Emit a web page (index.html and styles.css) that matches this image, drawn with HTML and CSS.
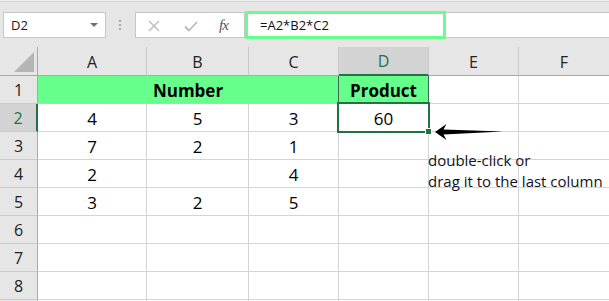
FILE: index.html
```html
<html>
<head>
<title>Product formula</title>
<link rel="stylesheet" href="styles.css">
</head>
<body>

<div id="toolbar">
	<div class="namebox"><span>D2</span><span class="caret"></span></div>
	<div class="grip"><i></i><i></i><i></i></div>
	<div class="fbtns">
		<svg class="ico" width="12" height="12" viewBox="0 0 12 12"><path d="M1 1 L11 11 M11 1 L1 11" stroke="#bababa" stroke-width="1.4" fill="none"/></svg>
		<svg class="ico" width="14" height="11" viewBox="0 0 14 11"><path d="M1 5.5 L5 9.5 L13 1" stroke="#bababa" stroke-width="1.8" fill="none"/></svg>
		<span class="fx">fx</span>
	</div>
	<div class="formula">=A2*B2*C2<div class="mark"></div></div>
</div>

<div id="sheet">
	<div class="corner"><span></span></div>
	<div class="colhead">A</div>
	<div class="colhead">B</div>
	<div class="colhead">C</div>
	<div class="colhead sel">D</div>
	<div class="colhead">E</div>
	<div class="colhead">F</div>

	<div class="rowhead">1</div>
	<div class="cell title merged">Number</div>
	<div class="cell title prod">Product</div>
	<div class="cell"></div>
	<div class="cell"></div>

	<div class="rowhead sel">2</div>
	<div class="cell">4</div>
	<div class="cell">5</div>
	<div class="cell">3</div>
	<div class="cell">60</div>
	<div class="cell"></div>
	<div class="cell"></div>

	<div class="rowhead">3</div>
	<div class="cell">7</div>
	<div class="cell">2</div>
	<div class="cell">1</div>
	<div class="cell"></div>
	<div class="cell"></div>
	<div class="cell"></div>

	<div class="rowhead">4</div>
	<div class="cell">2</div>
	<div class="cell"></div>
	<div class="cell">4</div>
	<div class="cell"></div>
	<div class="cell"></div>
	<div class="cell"></div>

	<div class="rowhead">5</div>
	<div class="cell">3</div>
	<div class="cell">2</div>
	<div class="cell">5</div>
	<div class="cell"></div>
	<div class="cell"></div>
	<div class="cell"></div>

	<div class="rowhead">6</div>
	<div class="cell"></div>
	<div class="cell"></div>
	<div class="cell"></div>
	<div class="cell"></div>
	<div class="cell"></div>
	<div class="cell"></div>

	<div class="rowhead">7</div>
	<div class="cell"></div>
	<div class="cell"></div>
	<div class="cell"></div>
	<div class="cell"></div>
	<div class="cell"></div>
	<div class="cell"></div>

	<div class="rowhead">8</div>
	<div class="cell"></div>
	<div class="cell"></div>
	<div class="cell"></div>
	<div class="cell"></div>
	<div class="cell"></div>
	<div class="cell"></div>

	<div class="rowhead last"></div>
	<div class="cell last"></div>
	<div class="cell last"></div>
	<div class="cell last"></div>
	<div class="cell last"></div>
	<div class="cell last"></div>
	<div class="cell last"></div>
</div>

<!-- selection on D2 and the note pointing at its fill handle -->
<div class="selbox"><span class="handle"></span></div>
<svg class="arrow" width="72" height="20" viewBox="0 0 72 20"><path d="M2 10 L13.5 2 L10.5 7.5 L70 9.6 L10.5 12.5 L13.5 18 Z" fill="#000"/></svg>
<div class="note">double-click or<br>drag it to the last column</div>

</body>
</html>
```

FILE: styles.css
```css
html, body {
	margin: 0px;
	padding: 0px;
	width: 100%;
	height: 100%;
	overflow: hidden;
	background-color: #ffffff;
	font-family: "Open Sans", sans-serif;
	color: #000000;
}
#toolbar {
	height: 47px;
	box-sizing: border-box;
	padding: 12px 0 0 3px;
	display: flex;
	align-items: flex-start;
	background: linear-gradient(#efefef 0 1px, #d6d6d6 1px 2px, #e6e6e6 2px);
}
.namebox {
	width: 103px;
	height: 26px;
	box-sizing: border-box;
	border: 1px solid #c6c6c6;
	background-color: #ffffff;
	display: flex;
	align-items: center;
	justify-content: space-between;
	padding: 0 7px 0 7px;
	font-size: 13px;
	color: #222222;
}
.caret {
	width: 0;
	height: 0;
	border-left: 4px solid transparent;
	border-right: 4px solid transparent;
	border-top: 4px solid #707070;
}
.grip {
	margin: 8px 14px 0 13px;
	width: 2px;
	display: flex;
	flex-direction: column;
	gap: 2px;
}
.grip i {
	width: 2px;
	height: 2px;
	background-color: #a8a8a8;
}
.fbtns {
	width: 110px;
	height: 26px;
	box-sizing: border-box;
	border: 1px solid #c6c6c6;
	background-color: #ffffff;
	display: flex;
	align-items: center;
	padding: 0 0 0 12px;
	gap: 24px;
}
.ico {
	display: block;
	margin-top: 2px;
}
.fx {
	font-family: "Liberation Serif", serif;
	font-style: italic;
	font-size: 15px;
	color: #555555;
	letter-spacing: -1px;
	margin-left: -3px;
}
.formula {
	flex: 1;
	height: 26px;
	box-sizing: border-box;
	border-top: 1px solid #c6c6c6;
	border-bottom: 1px solid #c6c6c6;
	background-color: #ffffff;
	position: relative;
	padding-left: 15px;
	font-size: 13px;
	line-height: 24px;
	color: #111111;
}
.mark {
	position: absolute;
	left: 0;
	top: -2px;
	width: 201px;
	height: 28px;
	box-sizing: border-box;
	border: 3px solid #66ff8c;
}

#sheet {
	display: grid;
	grid-template-columns: 38px 109px 102px 90px 90px 90px 91px;
	grid-template-rows: 29px repeat(8, 28px) 1px;
}
#sheet > div {
	box-sizing: border-box;
	border-right: 1px solid #d4d4d4;
	border-bottom: 1px solid #d4d4d4;
	display: flex;
	align-items: center;
	justify-content: center;
	min-height: 0;
	overflow: hidden;
}
#sheet > .last {
	border-bottom: none;
	padding: 0;
}
.corner {
	background-color: #e6e6e6;
	position: relative;
	border-right-color: #a9a9a9 !important;
	border-bottom-color: #a9a9a9 !important;
}
.corner span {
	position: absolute;
	right: 3px;
	bottom: 3px;
	width: 0;
	height: 0;
	border-left: 20px solid transparent;
	border-bottom: 20px solid #b5b5b5;
}
#sheet .colhead {
	background-color: #e6e6e6;
	border-right-color: #cacaca;
	border-bottom-color: #a9a9a9;
	font-size: 16px;
	color: #222222;
	padding-top: 1px;
}
#sheet .rowhead {
	background-color: #e6e6e6;
	border-right-color: #a9a9a9;
	border-bottom-color: #cacaca;
	font-size: 16px;
	color: #222222;
	padding-top: 1px;
}
#sheet .colhead.sel {
	background-color: #d3d3d3;
	color: #217346;
	border-bottom: 2px solid #217346;
}
#sheet .rowhead.sel {
	background-color: #d3d3d3;
	color: #217346;
	border-right: 2px solid #217346;
}
.cell {
	font-size: 17px;
	padding-top: 2px;
}
#sheet .title {
	background-color: #66ff8c;
	font-weight: bold;
	border-bottom-color: #c8c8c8;
}
#sheet .merged {
	grid-column: span 3;
	border-right-color: #3a6a50;
}
#sheet .prod {
	border-right-color: #3a6a50;
}
.selbox {
	position: absolute;
	left: 337px;
	top: 102px;
	width: 93px;
	height: 31px;
	box-sizing: border-box;
	border: 2px solid #217346;
}
.handle {
	position: absolute;
	right: -4px;
	bottom: -4px;
	width: 5px;
	height: 5px;
	background-color: #217346;
	border: 1px solid #ffffff;
}
.arrow {
	position: absolute;
	left: 433px;
	top: 122px;
}
.note {
	position: absolute;
	left: 428px;
	top: 150px;
	font-size: 15px;
	line-height: 21px;
	color: #111122;
	white-space: nowrap;
}
```
